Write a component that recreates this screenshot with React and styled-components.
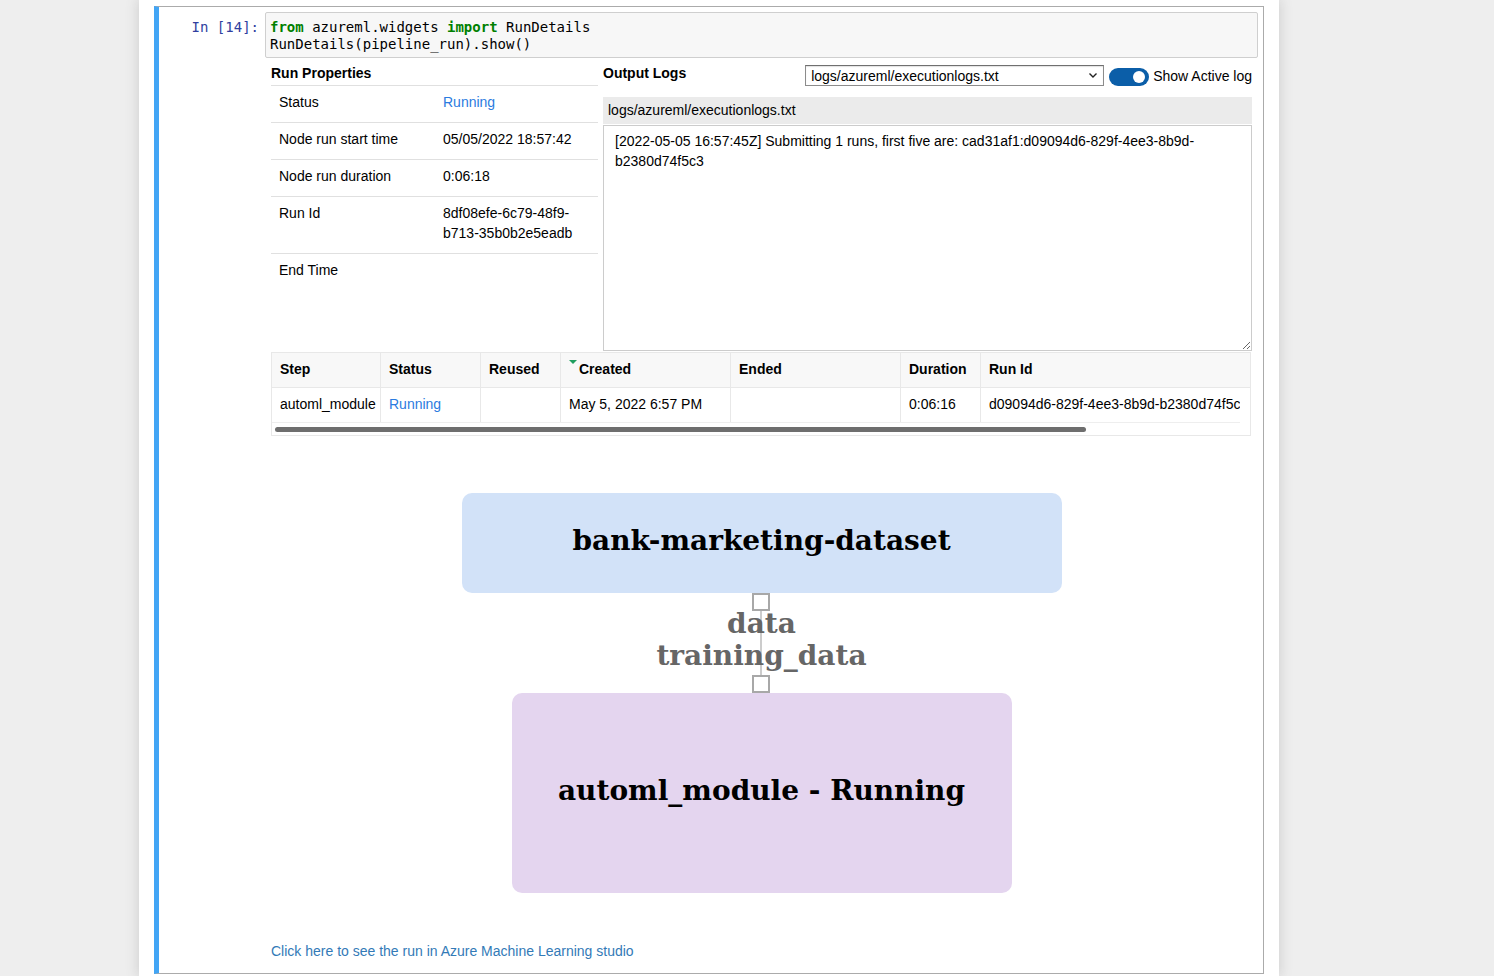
import React from "react";
import styled, { createGlobalStyle } from "styled-components";

const Global = createGlobalStyle`
  html, body { margin: 0; padding: 0; }
  body {
    background: #eeeeee;
    font-family: "Liberation Sans", Arial, sans-serif;
    font-size: 14px;
    color: #000;
  }
`;

const Page = styled.div`
  padding-left: 139px;
  min-height: 976px;
  box-sizing: border-box;
`;

const Container = styled.div`
  width: 1140px;
  min-height: 976px;
  box-sizing: border-box;
  background: #fff;
  padding: 6px 15px 0 15px;
  box-shadow: 0 0 12px 1px rgba(87, 87, 87, 0.2);
`;

const Cell = styled.div`
  border: 1px solid #ababab;
  border-left: 5px solid #42a5f5;
  padding: 5px;
  padding-bottom: 12px;
`;

const Row = styled.div`
  display: flex;
  align-items: flex-start;
`;

const Prompt = styled.div`
  width: 101px;
  flex: none;
  box-sizing: border-box;
  padding: 7px 6px 0 0;
  text-align: right;
  font-family: "DejaVu Sans Mono", monospace;
  font-size: 14px;
  line-height: 17px;
  color: #303f9f;
`;

const InputArea = styled.div`
  flex: 1;
  background: #f7f7f7;
  border: 1px solid #cfcfcf;
  border-radius: 2px;
  padding: 6px 4px 4px 4px;
`;

const Code = styled.pre`
  margin: 0;
  font-family: "DejaVu Sans Mono", monospace;
  font-size: 14px;
  line-height: 17px;
  color: #000;
`;

const Kw = styled.span`
  color: #008000;
  font-weight: bold;
`;

const Widget = styled.div`
  flex: 1;
  padding: 4px 6px 0 6px;
  min-width: 0;
`;

const TopSplit = styled.div`
  display: grid;
  grid-template-columns: 327px 1fr;
  column-gap: 5px;
`;

const PanelTitle = styled.div`
  font-weight: bold;
  line-height: ${(p) => (p.$ruled ? "23px" : "22px")};
  ${(p) => (p.$ruled ? "border-bottom: 1px solid #e0e0e0;" : "")}
`;

const PropRow = styled.div`
  display: grid;
  grid-template-columns: 164px 1fr;
  line-height: 20px;
  border-bottom: ${(p) => (p.$last ? "none" : "1px solid #e0e0e0")};
`;

const PropCell = styled.div`
  padding: 6px 8px 10px 8px;
  color: ${(p) => (p.$link ? "#2b7be0" : "#000")};
`;

const LogsPanel = styled.div`
  display: flex;
  flex-direction: column;
`;

const LogsHeader = styled.div`
  display: flex;
  justify-content: space-between;
  align-items: flex-start;
  height: 35px;
`;

const Controls = styled.div`
  display: flex;
  align-items: center;
  padding-top: 3px;
`;

const SelectWrap = styled.span`
  position: relative;
  display: inline-block;
  margin-right: 5px;
`;

const LogSelect = styled.select`
  appearance: none;
  width: 299px;
  height: 21px;
  box-sizing: border-box;
  border: 1px solid #8c8c8c;
  border-top-color: #6f6f6f;
  border-radius: 0;
  background: #fff;
  padding: 0 20px 0 5px;
  font-family: "Liberation Sans", Arial, sans-serif;
  font-size: 14px;
  color: #000;
  box-shadow: inset 0 1px 1px rgba(0, 0, 0, 0.12);
`;

const Chevron = styled.svg`
  position: absolute;
  right: 6px;
  top: 7px;
  pointer-events: none;
`;

const Toggle = styled.span`
  display: inline-flex;
  justify-content: flex-end;
  align-items: center;
  width: 40px;
  height: 18px;
  box-sizing: border-box;
  padding: 0 4px;
  border-radius: 9px;
  background: #0b5ea8;
  margin-right: 4px;
  margin-top: 2px;
`;

const Knob = styled.span`
  width: 12px;
  height: 12px;
  border-radius: 50%;
  background: #fff;
`;

const ToggleLabel = styled.span`
  line-height: 20px;
`;

const LogFileBar = styled.div`
  background: #ebebeb;
  height: 27px;
  line-height: 27px;
  padding-left: 5px;
`;

const LogText = styled.textarea`
  margin-top: 1px;
  height: 226px;
  box-sizing: border-box;
  border: 1px solid #cccccc;
  border-radius: 0;
  padding: 5px 11px;
  font-family: "Liberation Sans", Arial, sans-serif;
  font-size: 14px;
  line-height: 20px;
  color: #000;
  resize: vertical;
  outline: none;
`;

const StepsFrame = styled.div`
  margin: 1px 0 0 0;
  width: 980px;
  box-sizing: border-box;
  border: 1px solid #e8e8e8;
  overflow: hidden;
`;

const COLS = "109px 100px 80px 170px 170px 80px 270px";

const StepsHead = styled.div`
  display: grid;
  grid-template-columns: ${COLS};
  background: #f8f8f8;
  border-bottom: 1px solid #e8e8e8;
  font-weight: bold;
`;

const StepsBody = styled.div`
  display: grid;
  grid-template-columns: ${COLS};
  width: 968px;
  overflow: hidden;
  border-bottom: 1px solid #eeeeee;
`;

const TCell = styled.div`
  height: 34px;
  line-height: 32px;
  padding: 0 8px;
  white-space: nowrap;
  overflow: hidden;
  border-right: ${(p) => (p.$end ? "none" : "1px solid #e8e8e8")};
  color: ${(p) => (p.$link ? "#2b7be0" : "#000")};
  display: flex;
  align-items: flex-start;
`;

const SortMark = styled.span`
  width: 0;
  height: 0;
  border-left: 4px solid transparent;
  border-right: 4px solid transparent;
  border-top: 4px solid #1f9e5f;
  margin: 7px 2px 0 0;
`;

const ScrollTrack = styled.div`
  height: 12px;
  padding: 4px 0 0 3px;
  box-sizing: border-box;
`;

const ScrollThumb = styled.div`
  width: 811px;
  height: 5px;
  border-radius: 3px;
  background: #6e6e6e;
`;

const Graph = styled.div`
  margin-top: 57px;
  display: flex;
  flex-direction: column;
  align-items: center;
`;

const NodeBox = styled.div`
  width: ${(p) => p.$w}px;
  height: ${(p) => p.$h}px;
  box-sizing: border-box;
  padding-bottom: 6px;
  background: ${(p) => p.$bg};
  border-radius: 10px;
  display: flex;
  align-items: center;
  justify-content: center;
  font-family: "DejaVu Serif", serif;
  font-weight: bold;
  font-size: 28px;
  color: #000;
`;

const Connector = styled.div`
  height: 100px;
  display: flex;
  flex-direction: column;
  align-items: center;
`;

const Port = styled.div`
  width: 18px;
  height: 18px;
  box-sizing: border-box;
  border: 2px solid #a8a8a8;
  background: #fff;
  flex: none;
`;

const EdgeLabels = styled.div`
  flex: 1;
  display: flex;
  flex-direction: column;
  align-items: center;
  background: linear-gradient(#cccccc, #cccccc) center / 2px 100% no-repeat;
  font-family: "DejaVu Serif", serif;
  font-weight: bold;
  font-size: 28px;
  line-height: 32px;
  color: #666666;
  white-space: nowrap;
`;

const EdgeText = styled.span`
  margin-top: ${(p) => (p.$first ? "-3px" : "0")};
`;

const StudioLink = styled.a`
  display: block;
  margin-top: 48px;
  line-height: 20px;
  color: #337ab7;
  text-decoration: none;
`;

const props = [
  ["Status", "Running", true],
  ["Node run start time", "05/05/2022 18:57:42"],
  ["Node run duration", "0:06:18"],
  ["Run Id", "8df08efe-6c79-48f9-b713-35b0b2e5eadb"],
  ["End Time", ""],
];

const logText =
  "[2022-05-05 16:57:45Z] Submitting 1 runs, first five are: cad31af1:d09094d6-829f-4ee3-8b9d-b2380d74f5c3";

export default function App() {
  return (
    <>
      <Global />
      <Page>
        <Container>
          <Cell>
            <Row>
              <Prompt>In&nbsp;[14]:</Prompt>
              <InputArea>
                <Code>
                  <Kw>from</Kw> azureml.widgets <Kw>import</Kw> RunDetails{"\n"}
                  RunDetails(pipeline_run).show()
                </Code>
              </InputArea>
            </Row>
            <Row>
              <Prompt />
              <Widget>
                <TopSplit>
                  <div>
                    <PanelTitle $ruled>Run Properties</PanelTitle>
                    {props.map(([k, v, link], i) => (
                      <PropRow key={k} $last={i === props.length - 1}>
                        <PropCell>{k}</PropCell>
                        <PropCell $link={link}>{v}</PropCell>
                      </PropRow>
                    ))}
                  </div>
                  <LogsPanel>
                    <LogsHeader>
                      <PanelTitle>Output Logs</PanelTitle>
                      <Controls>
                        <SelectWrap>
                          <LogSelect defaultValue="exec">
                            <option value="exec">logs/azureml/executionlogs.txt</option>
                          </LogSelect>
                          <Chevron width="10" height="7" viewBox="0 0 10 7">
                            <path d="M1.5 1.5 L5 5 L8.5 1.5" fill="none" stroke="#222" strokeWidth="1.4" />
                          </Chevron>
                        </SelectWrap>
                        <Toggle>
                          <Knob />
                        </Toggle>
                        <ToggleLabel>Show Active log</ToggleLabel>
                      </Controls>
                    </LogsHeader>
                    <LogFileBar>logs/azureml/executionlogs.txt</LogFileBar>
                    <LogText readOnly value={logText} />
                  </LogsPanel>
                </TopSplit>
                <StepsFrame>
                  <StepsHead>
                    <TCell>Step</TCell>
                    <TCell>Status</TCell>
                    <TCell>Reused</TCell>
                    <TCell>
                      <SortMark />
                      Created
                    </TCell>
                    <TCell>Ended</TCell>
                    <TCell>Duration</TCell>
                    <TCell $end>Run Id</TCell>
                  </StepsHead>
                  <StepsBody>
                    <TCell>automl_module</TCell>
                    <TCell $link>Running</TCell>
                    <TCell />
                    <TCell>May 5, 2022 6:57 PM</TCell>
                    <TCell />
                    <TCell>0:06:16</TCell>
                    <TCell $end>d09094d6-829f-4ee3-8b9d-b2380d74f5c</TCell>
                  </StepsBody>
                  <ScrollTrack>
                    <ScrollThumb />
                  </ScrollTrack>
                </StepsFrame>
                <Graph>
                  <NodeBox $w={600} $h={100} $bg="#d2e2f8">
                    bank-marketing-dataset
                  </NodeBox>
                  <Connector>
                    <Port />
                    <EdgeLabels>
                      <EdgeText $first>data</EdgeText>
                      <EdgeText>training_data</EdgeText>
                    </EdgeLabels>
                    <Port />
                  </Connector>
                  <NodeBox $w={500} $h={200} $bg="#e4d5ef">
                    automl_module - Running
                  </NodeBox>
                </Graph>
                <StudioLink href="#">
                  Click here to see the run in Azure Machine Learning studio
                </StudioLink>
              </Widget>
            </Row>
          </Cell>
        </Container>
      </Page>
    </>
  );
}
